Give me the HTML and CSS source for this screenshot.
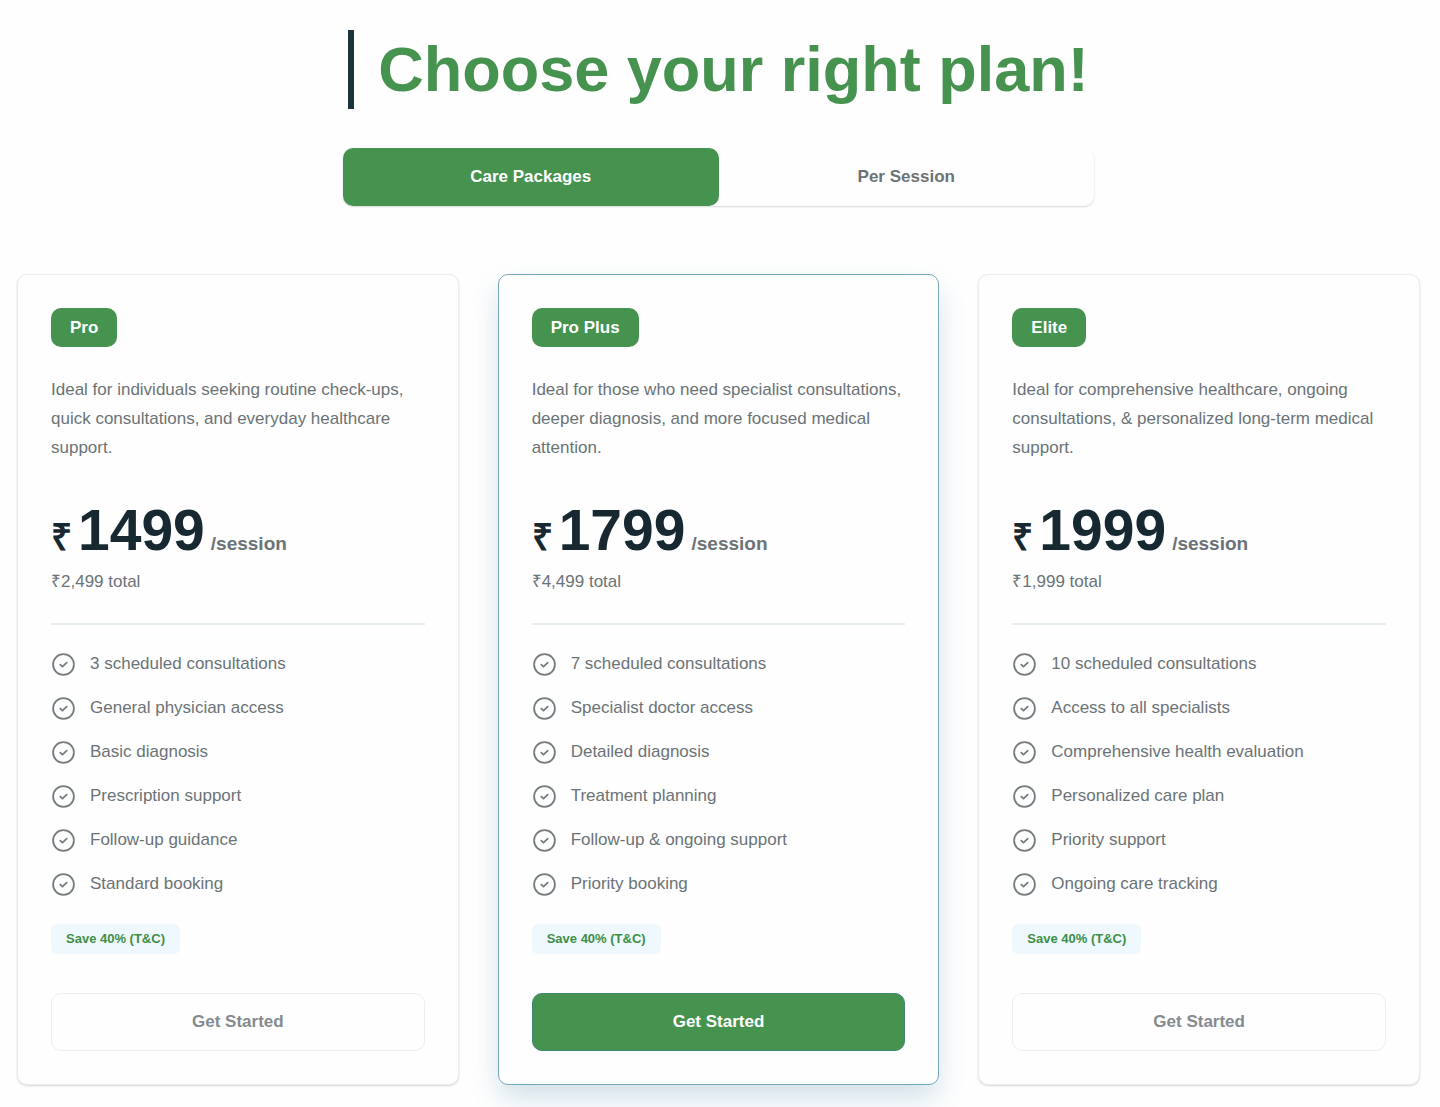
FILE: index.html
```html
<!DOCTYPE html>
<html lang="en">
<head>
    <meta charset="UTF-8">
    <meta name="viewport" content="width=device-width, initial-scale=1.0">
    <title>Choose your right plan</title>
    <link rel="stylesheet" href="styles.css">
</head>
<body>

    <!-- shared check icon -->
    <svg class="icon-defs" aria-hidden="true">
        <symbol id="check" viewBox="0 0 24 24">
            <circle cx="12.5" cy="12.5" r="10.4" />
            <path d="M9.3 12.7l2.2 2 4.2-4" />
        </symbol>
    </svg>

    <section class="pricing">
        <h1 class="title">Choose your right plan!</h1>

        <div class="toggle">
            <button type="button" class="toggle-btn active">Care Packages</button>
            <button type="button" class="toggle-btn">Per Session</button>
        </div>

        <div class="plans">
            <article class="card">
                <h2 class="plan-name">Pro</h2>
                <p class="description">Ideal for individuals seeking routine check-ups, quick consultations, and everyday healthcare support.</p>
                <p class="price"><span class="currency">₹</span><span class="amount">1499</span><span class="period">/session</span></p>
                <p class="total">₹2,499 total</p>
                <ul class="features">
                    <li><svg class="check"><use href="#check" /></svg>3 scheduled consultations</li>
                    <li><svg class="check"><use href="#check" /></svg>General physician access</li>
                    <li><svg class="check"><use href="#check" /></svg>Basic diagnosis</li>
                    <li><svg class="check"><use href="#check" /></svg>Prescription support</li>
                    <li><svg class="check"><use href="#check" /></svg>Follow-up guidance</li>
                    <li><svg class="check"><use href="#check" /></svg>Standard booking</li>
                </ul>
                <span class="save">Save 40% (T&amp;C)</span>
                <button type="button" class="start-btn">Get Started</button>
            </article>

            <article class="card featured">
                <h2 class="plan-name">Pro Plus</h2>
                <p class="description">Ideal for those who need specialist consultations, deeper diagnosis, and more focused medical attention.</p>
                <p class="price"><span class="currency">₹</span><span class="amount">1799</span><span class="period">/session</span></p>
                <p class="total">₹4,499 total</p>
                <ul class="features">
                    <li><svg class="check"><use href="#check" /></svg>7 scheduled consultations</li>
                    <li><svg class="check"><use href="#check" /></svg>Specialist doctor access</li>
                    <li><svg class="check"><use href="#check" /></svg>Detailed diagnosis</li>
                    <li><svg class="check"><use href="#check" /></svg>Treatment planning</li>
                    <li><svg class="check"><use href="#check" /></svg>Follow-up &amp; ongoing support</li>
                    <li><svg class="check"><use href="#check" /></svg>Priority booking</li>
                </ul>
                <span class="save">Save 40% (T&amp;C)</span>
                <button type="button" class="start-btn">Get Started</button>
            </article>

            <article class="card">
                <h2 class="plan-name">Elite</h2>
                <p class="description">Ideal for comprehensive healthcare, ongoing consultations, &amp; personalized long-term medical support.</p>
                <p class="price"><span class="currency">₹</span><span class="amount">1999</span><span class="period">/session</span></p>
                <p class="total">₹1,999 total</p>
                <ul class="features">
                    <li><svg class="check"><use href="#check" /></svg>10 scheduled consultations</li>
                    <li><svg class="check"><use href="#check" /></svg>Access to all specialists</li>
                    <li><svg class="check"><use href="#check" /></svg>Comprehensive health evaluation</li>
                    <li><svg class="check"><use href="#check" /></svg>Personalized care plan</li>
                    <li><svg class="check"><use href="#check" /></svg>Priority support</li>
                    <li><svg class="check"><use href="#check" /></svg>Ongoing care tracking</li>
                </ul>
                <span class="save">Save 40% (T&amp;C)</span>
                <button type="button" class="start-btn">Get Started</button>
            </article>
        </div>
    </section>

</body>
</html>
```
FILE: styles.css
```css
* {
    box-sizing: border-box;
}
body {
    margin: 0;
    font-family: "Liberation Sans", Arial, sans-serif;
    font-size: 17px;
    background: #fefefe;
    color: #6b7377;
}
h1, h2, p, ul {
    margin: 0;
    padding: 0;
}
button {
    font-family: inherit;
    font-size: 17px;
    font-weight: bold;
    cursor: pointer;
}
.icon-defs {
    display: none;
}
.pricing {
    display: flex;
    flex-direction: column;
    align-items: center;
    padding: 30px 20px 22px 17px;
}
.title {
    border-left: 6px solid #1c323c;
    padding-left: 24px;
    font-size: 63px;
    line-height: 79px;
    color: #46924f;
}

/* package / session switch */
.toggle {
    display: flex;
    width: 100%;
    max-width: 751px;
    margin-top: 39px;
    border-radius: 10px;
    background: #fefefe;
    box-shadow: 0 1px 2px rgba(0, 0, 0, 0.16);
}
.toggle-btn {
    flex: 1;
    height: 58px;
    border: none;
    border-radius: 10px;
    background: transparent;
    color: #6b7377;
}
.toggle-btn.active {
    background: #46924f;
    color: #fff;
}

.plans {
    display: grid;
    grid-template-columns: repeat(3, 1fr);
    gap: 39px;
    width: 100%;
    margin-top: 68px;
}
.card {
    display: flex;
    flex-direction: column;
    align-items: flex-start;
    padding: 33px;
    border: 1px solid #e6eeef;
    border-radius: 10px;
    background: #fefefe;
    box-shadow: 0 1px 2px rgba(0, 0, 0, 0.16);
}
.card.featured {
    border-color: #78a9b8;
    box-shadow: 0 14px 28px -2px rgba(60, 125, 165, 0.24);
}
.plan-name {
    padding: 0 19px;
    border-radius: 10px;
    background: #46924f;
    color: #fff;
    font-size: 17px;
    line-height: 39px;
}
.description {
    margin-top: 28px;
    line-height: 29px;
}
.price {
    display: flex;
    align-items: baseline;
    margin-top: 34px;
    color: #182830;
    font-weight: bold;
    line-height: 68px;
}
.currency {
    margin-right: 6px;
    font-size: 37px;
    line-height: 40px;
}
.amount {
    font-size: 57px;
}
.period {
    margin-left: 6px;
    font-size: 19px;
    line-height: 29px;
    color: #6b7377;
}
.total {
    margin-top: 3px;
    line-height: 29px;
}
.features {
    display: flex;
    flex-direction: column;
    gap: 20px;
    width: 100%;
    margin-top: 27px;
    padding-top: 27px;
    border-top: 2px solid #e6eeef;
    list-style: none;
}
.features li {
    display: flex;
    align-items: center;
    gap: 15px;
    line-height: 24px;
}
.check {
    width: 24px;
    height: 24px;
    fill: none;
    stroke: #757c80;
    stroke-width: 1.8;
    stroke-linecap: round;
    stroke-linejoin: round;
}
.save {
    margin-top: 28px;
    padding: 0 15px;
    border-radius: 6px;
    background: #eff8fc;
    color: #3d8f47;
    font-size: 13px;
    font-weight: bold;
    line-height: 30px;
}
.start-btn {
    width: 100%;
    height: 58px;
    margin-top: 39px;
    border: 1px solid #e9f0f1;
    border-radius: 10px;
    background: #fefefe;
    color: #858b8e;
}
.featured .start-btn {
    border-color: #3c8577;
    background: #46924f;
    color: #fff;
}

@media (max-width: 900px) {
    .plans {
        grid-template-columns: 1fr;
    }
    .title {
        font-size: 40px;
        line-height: 50px;
    }
}
```
